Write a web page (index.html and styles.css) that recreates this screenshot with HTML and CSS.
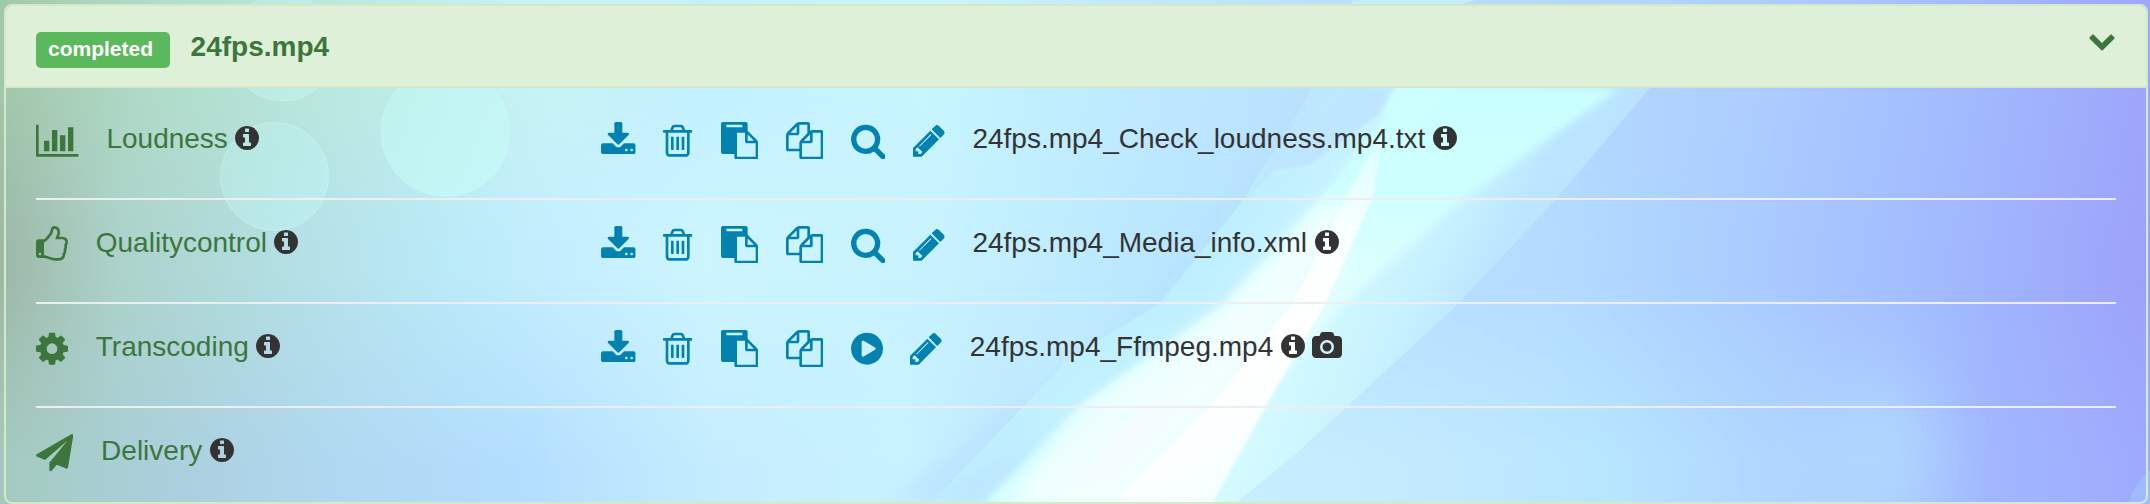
FILE: index.html
```html
<!DOCTYPE html>
<html lang="en">
<head>
<meta charset="utf-8">
<title>24fps.mp4</title>
<link rel="stylesheet" href="styles.css">
</head>
<body>
<svg class="backdrop" viewBox="0 0 2150 504" preserveAspectRatio="none" aria-hidden="true">
  <defs>
    <linearGradient id="top" gradientUnits="userSpaceOnUse" x1="0" y1="0" x2="2150" y2="0">
      <stop offset="0" stop-color="#a2c8ab"/><stop offset=".07" stop-color="#b0dcc8"/><stop offset=".16" stop-color="#bceae0"/><stop offset=".255" stop-color="#c8f4f4"/><stop offset=".325" stop-color="#c2f0ff"/><stop offset=".43" stop-color="#c8f6fe"/><stop offset=".51" stop-color="#c0ecff"/><stop offset=".6" stop-color="#bbe2ff"/><stop offset=".74" stop-color="#b2d8ff"/><stop offset=".815" stop-color="#aeceff"/><stop offset=".91" stop-color="#a2bcfe"/><stop offset="1" stop-color="#9ea6fb"/>
    </linearGradient>
    <linearGradient id="mid" gradientUnits="userSpaceOnUse" x1="0" y1="0" x2="2150" y2="0">
      <stop offset="0" stop-color="#9db8a8"/><stop offset=".055" stop-color="#acd2ca"/><stop offset=".14" stop-color="#b4e0e6"/><stop offset=".21" stop-color="#bbeaf8"/><stop offset=".26" stop-color="#c4eeff"/><stop offset=".33" stop-color="#ccf5fe"/><stop offset=".44" stop-color="#c6f2fe"/><stop offset=".54" stop-color="#bae6ff"/><stop offset=".72" stop-color="#b4dcff"/><stop offset=".81" stop-color="#aaccff"/><stop offset=".91" stop-color="#a1b8fe"/><stop offset="1" stop-color="#9ca2f9"/>
    </linearGradient>
    <linearGradient id="low" gradientUnits="userSpaceOnUse" x1="0" y1="0" x2="2150" y2="0">
      <stop offset="0" stop-color="#a4cabf"/><stop offset=".07" stop-color="#aacfda"/><stop offset=".16" stop-color="#b0d8f2"/><stop offset=".245" stop-color="#b4deff"/><stop offset=".33" stop-color="#c4ecff"/><stop offset=".42" stop-color="#c9f2ff"/><stop offset=".465" stop-color="#bfe8ff"/><stop offset=".57" stop-color="#c8efff"/><stop offset=".67" stop-color="#c2e9ff"/><stop offset=".745" stop-color="#b8e6ff"/><stop offset=".815" stop-color="#b1d8ff"/><stop offset=".88" stop-color="#add0ff"/><stop offset=".925" stop-color="#a1b7ff"/><stop offset="1" stop-color="#9eaafd"/>
    </linearGradient>
    <linearGradient id="fadeMid" x1="0" y1="0" x2="0" y2="1">
      <stop offset=".15" stop-color="#000"/><stop offset=".48" stop-color="#fff"/>
    </linearGradient>
    <linearGradient id="fadeLow" x1="0" y1="0" x2="0" y2="1">
      <stop offset=".55" stop-color="#000"/><stop offset=".92" stop-color="#fff"/>
    </linearGradient>
    <mask id="maskMid"><rect width="2150" height="504" fill="url(#fadeMid)"/></mask>
    <mask id="maskLow"><rect width="2150" height="504" fill="url(#fadeLow)"/></mask>
    <linearGradient id="rayWide" gradientUnits="userSpaceOnUse" x1="1230" y1="230" x2="1490" y2="380">
      <stop offset="0" stop-color="#c4f6ff" stop-opacity=".6"/><stop offset=".4" stop-color="#d8ffff" stop-opacity=".75"/><stop offset=".65" stop-color="#ccf6ff" stop-opacity=".75"/><stop offset=".8" stop-color="#bfeaff" stop-opacity=".7"/><stop offset="1" stop-color="#c4f0ff" stop-opacity=".5"/>
    </linearGradient>
    <linearGradient id="rayCore" gradientUnits="userSpaceOnUse" x1="0" y1="88" x2="0" y2="504">
      <stop offset="0" stop-color="#caffff"/><stop offset=".25" stop-color="#ceffff"/><stop offset=".5" stop-color="#e0fffd" stop-opacity=".9"/><stop offset="1" stop-color="#e8ffff" stop-opacity=".8"/>
    </linearGradient>
    <linearGradient id="rayWhite" gradientUnits="userSpaceOnUse" x1="0" y1="120" x2="0" y2="504">
      <stop offset="0" stop-color="#fff" stop-opacity=".15"/><stop offset=".3" stop-color="#fff" stop-opacity=".75"/><stop offset=".55" stop-color="#fff"/><stop offset="1" stop-color="#fff" stop-opacity=".7"/>
    </linearGradient>
    <linearGradient id="bubble" x1="0" y1="0" x2="1" y2="1">
      <stop offset="0" stop-color="#bff5ee" stop-opacity=".35"/><stop offset="1" stop-color="#c4f8fa" stop-opacity=".45"/>
    </linearGradient>
    <linearGradient id="bubbleLarge" x1="0" y1="0" x2="1" y2="1">
      <stop offset="0" stop-color="#c0f6f0" stop-opacity=".6"/><stop offset="1" stop-color="#c8fafa" stop-opacity=".8"/>
    </linearGradient>
    <filter id="soft1" x="-20%" y="-20%" width="140%" height="140%"><feGaussianBlur stdDeviation="1.2"/></filter>
    <filter id="soft4" x="-20%" y="-20%" width="140%" height="140%"><feGaussianBlur stdDeviation="4"/></filter>
    <filter id="soft8" x="-20%" y="-20%" width="140%" height="140%"><feGaussianBlur stdDeviation="9"/></filter>
    <filter id="soft30" x="-120%" y="-120%" width="340%" height="340%"><feGaussianBlur stdDeviation="32"/></filter>
  </defs>
  <rect width="2150" height="504" fill="url(#top)"/>
  <rect width="2150" height="504" fill="url(#mid)" mask="url(#maskMid)"/>
  <rect width="2150" height="504" fill="url(#low)" mask="url(#maskLow)"/>
  <ellipse cx="1880" cy="445" rx="45" ry="50" fill="#b2dcff" opacity=".7" filter="url(#soft30)"/>
  <path d="M1310 88L1240 185L1160 290L1030 395L880 504H980L1050 405L1165 303L1247 198L1325 88Z" fill="#b4dcff" opacity=".4" filter="url(#soft8)"/>
  <path d="M1312 88L1300 110L1245 198L1160 303L1068 360L930 504H1235L1300 450L1458 304L1555 200L1650 88Z" fill="url(#rayWide)"/>
  <path d="M1115 385L1030 445L920 504H978L1075 410Z" fill="#b8deff" opacity=".55" filter="url(#soft8)"/>
  <path d="M1312 88L1300 110L1247 198L1300 145L1347 88Z" fill="#bde2ff" opacity=".6"/>
  <path d="M1347 88L1300 145L1275 170L1310 165L1378 115L1395 88Z" fill="#bde2ff" opacity=".7" filter="url(#soft1)"/>
  <path d="M1395 88L1380 125L1320 200L1225 304L1080 406L985 504H1205L1256 406L1345 304L1462 200L1620 88Z" fill="url(#rayCore)" filter="url(#soft4)"/>
  <path d="M1395 88L1380 125L1320 200L1225 304L1080 406L985 504H1050L1290 260L1400 150L1450 88Z" fill="#d0ffff" opacity=".5"/>
  <path d="M1320 200L1230 304L1100 406L1010 504H1150L1240 440L1290 340L1345 270L1352 200Z" fill="#fff" opacity=".45" filter="url(#soft8)"/>
  <path d="M1384 130L1350 190L1292 304L1210 406L1110 504H1212L1275 390L1325 304L1372 200Z" fill="url(#rayWhite)" filter="url(#soft1)"/>
  <path d="M1320 210L1225 304L1080 406L1010 504H1110L1250 350L1340 210Z" fill="#fff" opacity=".3" filter="url(#soft4)"/>
  <path d="M1353 0H1475L1460 5H1350Z" fill="#c2f0ff"/>
  <g stroke="#cdfaf8" stroke-opacity=".45">
    <circle cx="283" cy="47.5" r="53.5" fill="url(#bubble)"/>
    <circle cx="274.500" cy="176.500" r="54" fill="url(#bubble)"/>
    <circle cx="445.500" cy="132" r="64.500" fill="url(#bubbleLarge)"/>
  </g>
  <path d="M2128 504Q2136 480 2150 470V504Z" fill="#a4c4ff" opacity=".6"/>
</svg>

<svg class="sprite" aria-hidden="true">
  <symbol id="bar-chart" viewBox="0 0 2048 1792"><path d="M640 896v512h-256v-512h256zm384-512v1024h-256v-1024h256zm1024 1152v128h-2048v-1536h128v1408h1920zm-640-896v768h-256v-768h256zm384-384v1152h-256v-1152h256z"/></symbol>
  <symbol id="thumbs-up" viewBox="0 0 1536 1792"><path d="M256 1344q0-26-19-45t-45-19-45 19-19 45 19 45 45 19 45-19 19-45zm1152-576q0-51-39-89.500t-89-38.500h-352q0-58 48-159.500t48-160.500q0-98-32-145t-128-47q-26 26-38 85t-30.500 125.500-59.500 109.500q-22 23-77 91-4 5-23 30t-31.500 41-34.500 42.500-40 44-38.500 35.500-40 27-35.500 9h-32v640h32q13 0 31.500 3t33 6.500 38 11 35 11.500 35.500 12.500 29 10.500q211 73 342 73h121q192 0 192-167 0-26-5-56 30-16 47.500-52.500t17.500-73.500-18-69q53-50 53-119 0-25-10-55.500t-25-47.500q32-1 53.500-47t21.500-81zm128-1q0 89-49 163 9 33 9 69 0 77-38 144 3 21 3 43 0 101-60 178 1 139-85 219.500t-227 80.500h-129q-96 0-189.500-22.500t-216.500-65.500q-116-40-138-40h-288q-53 0-90.500-37.500t-37.500-90.500v-640q0-53 37.500-90.500t90.500-37.500h274q36-24 137-155 58-75 107-128 24-25 35.500-85.500t30.500-126.500 62-108q39-37 90-37 84 0 151 32.500t102 101.500 35 186q0 93-48 192h176q104 0 180 76t76 179z"/></symbol>
  <symbol id="gear" viewBox="128 0 1536 1792"><path d="M1152 896q0-106-75-181t-181-75-181 75-75 181 75 181 181 75 181-75 75-181zm512-109v222q0 12-8 23t-20 13l-185 28q-19 54-39 91 35 50 107 138 10 12 10 25t-9 23q-27 37-99 108t-94 71q-12 0-26-9l-138-108q-44 23-91 38-16 136-29 186-7 28-36 28h-222q-14 0-24.500-8.500t-11.500-21.500l-28-184q-49-16-90-37l-141 107q-10 9-25 9-14 0-25-11-126-114-165-168-7-10-7-23 0-12 8-23 15-21 51-66.500t54-70.500q-27-50-41-99l-183-27q-13-2-21-12.500t-8-23.500v-222q0-12 8-23t19-13l186-28q14-46 39-92-40-57-107-138-10-12-10-24 0-10 9-23 26-36 98.500-107.500t94.500-71.500q13 0 26 10l138 107q44-23 91-38 16-136 29-186 7-28 36-28h222q14 0 24.500 8.500t11.500 21.500l28 184q49 16 90 37l142-107q9-9 24-9 13 0 25 10 129 119 165 170 7 8 7 22 0 12-8 23-15 21-51 66.500t-54 70.500q26 50 41 98l183 28q13 2 21 12.500t8 23.500z"/></symbol>
  <symbol id="plane" viewBox="0 0 1792 1792"><path d="M1764 11q33 24 27 64l-256 1536q-5 29-32 45-14 8-31 8-11 0-24-5l-453-185-242 295q-18 23-49 23-13 0-22-4-19-7-30.500-23.500t-11.500-36.500v-349l864-1059-1069 925-395-162q-37-14-40-55-2-40 32-59l1664-960q15-9 32-9 20 0 36 11z"/></symbol>
  <symbol id="download" viewBox="64 0 1664 1792"><path d="M1344 1344q0-26-19-45t-45-19-45 19-19 45 19 45 45 19 45-19 19-45zm256 0q0-26-19-45t-45-19-45 19-19 45 19 45 45 19 45-19 19-45zm128-224v320q0 40-28 68t-68 28h-1472q-40 0-68-28t-28-68v-320q0-40 28-68t68-28h465l135 136q58 56 136 56t136-56l136-136h464q40 0 68 28t28 68zm-325-569q17 41-14 70l-448 448q-18 19-45 19t-45-19l-448-448q-31-29-14-70 17-39 59-39h256v-448q0-26 19-45t45-19h256q26 0 45 19t19 45v448h256q42 0 59 39z"/></symbol>
  <symbol id="trash" viewBox="192 0 1408 1792"><path d="M704 736v576q0 14-9 23t-23 9h-64q-14 0-23-9t-9-23v-576q0-14 9-23t23-9h64q14 0 23 9t9 23zm256 0v576q0 14-9 23t-23 9h-64q-14 0-23-9t-9-23v-576q0-14 9-23t23-9h64q14 0 23 9t9 23zm256 0v576q0 14-9 23t-23 9h-64q-14 0-23-9t-9-23v-576q0-14 9-23t23-9h64q14 0 23 9t9 23zm128 724v-948h-896v948q0 22 7 40.500t14.500 27 10.500 8.500h832q3 0 10.500-8.500t14.500-27 7-40.500zm-672-1076h448l-48-117q-7-9-17-11h-317q-10 2-17 11zm928 32v64q0 14-9 23t-23 9h-96v948q0 83-47 143.500t-113 60.500h-832q-66 0-113-58.500t-47-141.500v-952h-96q-14 0-23-9t-9-23v-64q0-14 9-23t23-9h309l70-167q15-37 54-63t79-26h320q40 0 79 26t54 63l70 167h309q14 0 23 9t9 23z"/></symbol>
  <symbol id="paste" viewBox="0 0 1792 1792"><path d="M768 1664h896v-640h-416q-40 0-68-28t-28-68v-416h-384v1152zm256-1440v-64q0-13-9.500-22.500t-22.500-9.500h-704q-13 0-22.500 9.500t-9.500 22.500v64q0 13 9.500 22.500t22.500 9.500h704q13 0 22.500-9.500t9.500-22.500zm256 672h299l-299-299v299zm512 128v672q0 40-28 68t-68 28h-960q-40 0-68-28t-28-68v-160h-544q-40 0-68-28t-28-68v-1344q0-40 28-68t68-28h1088q40 0 68 28t28 68v328q21 13 36 28l408 408q28 28 48 76t20 88z"/></symbol>
  <symbol id="files" viewBox="0 0 1792 1792"><path d="M1696 384q40 0 68 28t28 68v1216q0 40-28 68t-68 28h-960q-40 0-68-28t-28-68v-288h-544q-40 0-68-28t-28-68v-672q0-40 20-88t48-76l408-408q28-28 76-48t88-20h416q40 0 68 28t28 68v328q68-40 128-40h416zm-544 213l-299 299h299v-299zm-640-384l-299 299h299v-299zm196 647l316-316v-416h-384v416q0 40-28 68t-68 28h-416v640h512v-256q0-40 20-88t48-76zm956 804v-1152h-384v416q0 40-28 68t-68 28h-416v640h896z"/></symbol>
  <symbol id="search" viewBox="64 0 1664 1792"><path d="M1216 832q0-185-131.500-316.500t-316.500-131.500-316.500 131.500-131.500 316.500 131.500 316.500 316.500 131.500 316.500-131.500 131.500-316.500zm512 832q0 52-38 90t-90 38q-54 0-90-38l-343-342q-179 124-399 124-143 0-273.500-55.500t-225-150-150-225-55.500-273.500 55.500-273.500 150-225 225-150 273.500-55.500 273.500 55.500 225 150 150 225 55.500 273.500q0 220-124 399l343 343q37 37 37 90z"/></symbol>
  <symbol id="pencil" viewBox="128 0 1536 1792"><path d="M491 1536l91-91-235-235-91 91v107h128v128h107zm523-928q0-22-22-22-10 0-17 7l-542 542q-7 7-7 17 0 22 22 22 10 0 17-7l542-542q7-7 7-17zm-54-192l416 416-832 832h-416v-416zm683 96q0 53-37 90l-166 166-416-416 166-165q36-38 90-38 53 0 91 38l235 234q37 39 37 91z"/></symbol>
  <symbol id="play" viewBox="128 0 1536 1792"><path d="M896 128q209 0 385.500 103t279.500 279.500 103 385.500-103 385.500-279.500 279.500-385.500 103-385.500-103-279.500-279.500-103-385.500 103-385.500 279.500-279.500 385.500-103zm384 823q32-18 32-55t-32-55l-544-320q-31-19-64-1-32 19-32 56v640q0 37 32 56 16 8 32 8 17 0 32-9z"/></symbol>
  <symbol id="info" viewBox="128 0 1536 1792"><path d="M1152 1376v-160q0-14-9-23t-23-9h-96v-512q0-14-9-23t-23-9h-320q-14 0-23 9t-9 23v160q0 14 9 23t23 9h96v320h-96q-14 0-23 9t-9 23v160q0 14 9 23t23 9h448q14 0 23-9t9-23zm-128-896v-160q0-14-9-23t-23-9h-192q-14 0-23 9t-9 23v160q0 14 9 23t23 9h192q14 0 23-9t9-23zm640 416q0 209-103 385.500t-279.500 279.500-385.500 103-385.500-103-279.500-279.500-103-385.500 103-385.500 279.500-279.500 385.500-103 385.500 103 279.500 279.500 103 385.500z"/></symbol>
  <symbol id="camera" viewBox="0 0 1920 1792"><path d="M960 672q119 0 203.500 84.500t84.500 203.500-84.500 203.500-203.500 84.500-203.500-84.500-84.500-203.500 84.500-203.500 203.500-84.500zm704-416q106 0 181 75t75 181v896q0 106-75 181t-181 75h-1408q-106 0-181-75t-75-181v-896q0-106 75-181t181-75h224l51-136q19-49 69.500-84.500t103.500-35.500h512q53 0 103.500 35.500t69.500 84.500l51 136h224zm-704 1152q185 0 316.500-131.500t131.500-316.500-131.500-316.500-316.500-131.500-316.500 131.500-131.500 316.500 131.500 316.500 316.500 131.500z"/></symbol>
  <symbol id="chevron" viewBox="0 0 1792 1792"><path d="M1683 808l-742 741q-19 19-45 19t-45-19l-742-741q-19-19-19-45.500t19-45.500l166-165q19-19 45-19t45 19l531 531 531-531q19-19 45-19t45 19l166 165q19 19 19 45.500t-19 45.500z"/></symbol>
</svg>

<main class="panel">
  <header class="panel-heading">
    <span class="label">completed</span>
    <span class="title">24fps.mp4</span>
    <svg class="toggle"><use href="#chevron"/></svg>
  </header>
  <ul class="tasks">
    <li class="task">
      <div class="name"><svg class="icon w2048"><use href="#bar-chart"/></svg><span>Loudness</span><svg class="info"><use href="#info"/></svg></div>
      <div class="files">
        <svg class="icon w1664"><use href="#download"/></svg><svg class="icon w1408"><use href="#trash"/></svg><svg class="icon"><use href="#paste"/></svg><svg class="icon"><use href="#files"/></svg><svg class="icon w1664"><use href="#search"/></svg><svg class="icon w1536"><use href="#pencil"/></svg><span>24fps.mp4_Check_loudness.mp4.txt</span><svg class="info"><use href="#info"/></svg>
      </div>
    </li>
    <li class="task">
      <div class="name"><svg class="icon w1536"><use href="#thumbs-up"/></svg><span>Qualitycontrol</span><svg class="info"><use href="#info"/></svg></div>
      <div class="files">
        <svg class="icon w1664"><use href="#download"/></svg><svg class="icon w1408"><use href="#trash"/></svg><svg class="icon"><use href="#paste"/></svg><svg class="icon"><use href="#files"/></svg><svg class="icon w1664"><use href="#search"/></svg><svg class="icon w1536"><use href="#pencil"/></svg><span>24fps.mp4_Media_info.xml</span><svg class="info"><use href="#info"/></svg>
      </div>
    </li>
    <li class="task">
      <div class="name"><svg class="icon w1536"><use href="#gear"/></svg><span>Transcoding</span><svg class="info"><use href="#info"/></svg></div>
      <div class="files">
        <svg class="icon w1664"><use href="#download"/></svg><svg class="icon w1408"><use href="#trash"/></svg><svg class="icon"><use href="#paste"/></svg><svg class="icon"><use href="#files"/></svg><svg class="icon w1536"><use href="#play"/></svg><svg class="icon w1536"><use href="#pencil"/></svg><span>24fps.mp4_Ffmpeg.mp4</span><svg class="info"><use href="#info"/></svg><svg class="info camera"><use href="#camera"/></svg>
      </div>
    </li>
    <li class="task">
      <div class="name"><svg class="icon"><use href="#plane"/></svg><span>Delivery</span><svg class="info"><use href="#info"/></svg></div>
    </li>
  </ul>
</main>
</body>
</html>
```
FILE: styles.css
```css
* { box-sizing: border-box; }

body {
  margin: 0;
  height: 504px;
  padding: 4px 2px 0 4px;
  overflow: hidden;
  font: 28px/32px "Liberation Sans", Arial, sans-serif;
  color: #333;
}

.backdrop {
  position: absolute;
  inset: 0;
  z-index: -1;
  width: 100%;
  height: 100%;
}

.sprite { display: none; }

svg { fill: currentColor; }

.panel {
  height: 500px;
  border: 2px solid #d6e9c6;
  border-radius: 8px;
}

.panel-heading {
  display: flex;
  align-items: flex-start;
  height: 82px;
  padding: 24px 30px 0;
  border-bottom: 2px solid #d6e9c6;
  border-radius: 6px 6px 0 0;
  background: #dff0d8;
  color: #3c763d;
}

.label {
  width: 134px;
  height: 36px;
  margin: 2px 20.600px 0 0;
  padding-left: 12px;
  border-radius: 5px;
  background: #5cb85c;
  color: #fff;
  font-size: 21px;
  font-weight: bold;
  line-height: 33px;
}

.title {
  padding-top: 1px;
  font-weight: bold;
}

.toggle {
  width: 28px;
  height: 28px;
  margin: -4px 0 0 auto;
}

.tasks {
  margin: 0;
  padding: 8px 30px 0;
  list-style: none;
}

.task {
  display: flex;
  height: 104px;
  padding-top: 26px;
  border-bottom: 2px solid #eee;
}

.task:last-child { border-bottom: 0; }

.name, .files {
  display: flex;
  align-items: flex-start;
  white-space: nowrap;
}

.name {
  width: 565px;
  color: #3c763d;
}

.icon {
  flex: none;
  width: 37.330px;
  height: 37.330px;
  margin-right: 27.780px;
}

.task span { padding-top: 1px; }

.files .icon { color: #0382b0; }

.w1408 { width: 29.330px; }
.w1536 { width: 32px; }
.w1664 { width: 34.670px; }
.w2048 { width: 42.670px; }

.files span { margin-left: -.5px; }

.info {
  flex: none;
  width: 24px;
  height: 28px;
  margin: 2px 0 0 7.500px;
  color: #333;
}

.camera { width: 30px; }
```
